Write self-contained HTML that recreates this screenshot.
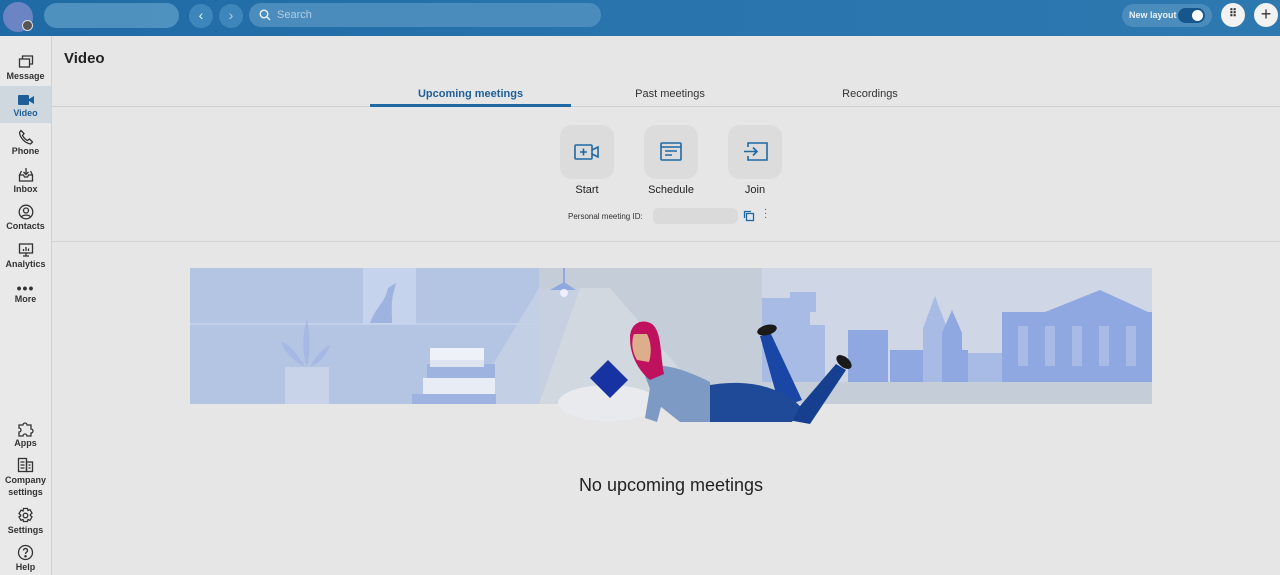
<!DOCTYPE html>
<html><head><meta charset="utf-8"><style>
*{margin:0;padding:0;box-sizing:border-box}
body{width:1280px;height:575px;overflow:hidden;background:#e6e6e6;font-family:"Liberation Sans",sans-serif;position:relative;color:#222}
.top{position:absolute;left:0;top:0;width:1280px;height:36px;background:linear-gradient(90deg,#1f6aa5,#2a74ad 50%,#2e78b0)}
.side{position:absolute;left:0;top:36px;width:52px;height:539px;background:#e9e9e9;border-right:1px solid #d2d2d2}
.si{position:absolute;left:0;width:51px;text-align:center;font-size:9px;color:#333;font-weight:bold}
.si svg{display:block;margin:0 auto 1px}
.abs{position:absolute}
</style></head><body>
<div class="top">
 <div class="abs" style="left:3px;top:2px;width:30px;height:30px;border-radius:50%;background:#6a84c4"></div>
 <div class="abs" style="left:22px;top:20px;width:11px;height:11px;border-radius:50%;background:#555;border:1.5px solid #ddd"></div>
 <div class="abs" style="left:44px;top:3px;width:135px;height:25px;border-radius:13px;background:#5a9bc6;opacity:.8"></div>
 <div class="abs" style="left:189px;top:4px;width:24px;height:24px;border-radius:50%;background:#3d86bb;color:#dfe;text-align:center;line-height:23px;font-size:14px">‹</div>
 <div class="abs" style="left:219px;top:4px;width:24px;height:24px;border-radius:50%;background:#3d86bb;color:#bcd;text-align:center;line-height:23px;font-size:14px">›</div>
 <div class="abs" style="left:249px;top:3px;width:352px;height:24px;border-radius:12px;background:#4a8dbd"></div>
 <svg class="abs" style="left:259px;top:9px" width="12" height="12" viewBox="0 0 12 12"><circle cx="5" cy="5" r="3.8" fill="none" stroke="#e5eef6" stroke-width="1.5"/><path d="M8 8l3 3" stroke="#e5eef6" stroke-width="1.5"/></svg>
 <div class="abs" style="left:277px;top:9px;font-size:11px;color:#b5cde0">Search</div>
 <div class="abs" style="left:1122px;top:4px;width:90px;height:23px;border-radius:12px;background:#4a8dbd"></div>
 <div class="abs" style="left:1129px;top:10px;font-size:9px;font-weight:bold;color:#e8f0f6">New layout</div>
 <div class="abs" style="left:1178px;top:8px;width:27px;height:15px;border-radius:8px;background:#15568d"></div>
 <div class="abs" style="left:1192px;top:10px;width:11px;height:11px;border-radius:50%;background:#fff"></div>
 <div class="abs" style="left:1221px;top:3px;width:24px;height:24px;border-radius:50%;background:#f2f2f2;text-align:center;line-height:22px;font-size:11px;font-weight:bold;color:#333">⠿</div>
 <div class="abs" style="left:1254px;top:3px;width:24px;height:24px;border-radius:50%;background:#f2f2f2;text-align:center;line-height:23px;font-size:18px;color:#333">+</div>
</div>
<div class="side">
 <div class="si" style="top:18px"><svg width="16" height="16" viewBox="0 0 16 16" fill="none" stroke="#333" stroke-width="1.3"><rect x="1.5" y="5" width="10" height="8"/><path d="M4.5 5V2h10v8h-3"/></svg>Message</div>
 <div class="abs" style="left:0;top:50px;width:51px;height:37px;background:#cfd8df"></div>
 <div class="si" style="top:57px;color:#1f5f98"><svg width="18" height="14" viewBox="0 0 18 14"><rect x="1" y="2" width="11" height="10" rx="1" fill="#1f5f98"/><path d="M12 6l5-3v8l-5-3z" fill="#1f5f98"/></svg>Video</div>
 <div class="si" style="top:93px"><svg width="16" height="16" viewBox="0 0 16 16" fill="none" stroke="#333" stroke-width="1.3"><path d="M3 1.5l3 3-1.5 2c1 2 3 4 5 5l2-1.5 3 3-2 2C7 14 2 9 1.5 3.5z"/></svg>Phone</div>
 <div class="si" style="top:131px"><svg width="16" height="16" viewBox="0 0 16 16" fill="none" stroke="#333" stroke-width="1.3"><path d="M1.5 8v6h13V8l-2-4M3.5 4l-2 4h4l1 2h3l1-2h4M8 1v6M5.5 5L8 7.5 10.5 5"/></svg>Inbox</div>
 <div class="si" style="top:168px"><svg width="16" height="16" viewBox="0 0 16 16" fill="none" stroke="#333" stroke-width="1.3"><circle cx="8" cy="8" r="6.8"/><circle cx="8" cy="6.5" r="2.5"/><path d="M3.5 13c1-2.5 8-2.5 9 0"/></svg>Contacts</div>
 <div class="si" style="top:206px"><svg width="16" height="16" viewBox="0 0 16 16" fill="none" stroke="#333" stroke-width="1.3"><rect x="1.5" y="2" width="13" height="9"/><path d="M8 11v3M5 14h6M5.5 9V7M8 9V5M10.5 9V6.5"/></svg>Analytics</div>
 <div class="si" style="top:246px"><div style="font-size:14px;line-height:12px;letter-spacing:1px">•••</div>More</div>
 <div class="si" style="top:384px"><svg width="18" height="17" viewBox="0 0 18 17" fill="none" stroke="#333" stroke-width="1.3"><path d="M2 5h4a2 2 0 114 0h4v4a2 2 0 110 4v3H10a2 2 0 10-4 0H2v-4a2 2 0 100-4z"/></svg>Apps</div>
 <div class="si" style="top:421px;line-height:12px"><svg width="17" height="16" viewBox="0 0 17 16" fill="none" stroke="#333" stroke-width="1.3"><rect x="1.5" y="1.5" width="8" height="13"/><rect x="9.5" y="5" width="6" height="9.5"/><path d="M3.5 5h4M3.5 8h4M3.5 11h4M11.5 8h2M11.5 11h2"/></svg>Company<br>settings</div>
 <div class="si" style="top:471px"><svg width="17" height="17" viewBox="0 0 17 17" fill="none" stroke="#333" stroke-width="1.3"><path d="M6.5 1.5h4l.5 2 2-.8 2 3.4-1.6 1.4v1l1.6 1.4-2 3.4-2-.8-.5 2h-4l-.5-2-2 .8-2-3.4L3.6 9V8L2 6.6l2-3.4 2 .8z"/><circle cx="8.5" cy="8.5" r="2.3"/></svg>Settings</div>
 <div class="si" style="top:508px"><svg width="17" height="17" viewBox="0 0 17 17" fill="none" stroke="#333" stroke-width="1.3"><circle cx="8.5" cy="8.5" r="7"/><path d="M6.5 6.5a2 2 0 113 1.7c-.8.5-1 1-1 1.8"/><circle cx="8.5" cy="12.3" r=".6" fill="#333"/></svg>Help</div>
</div>
<div class="abs" style="left:64px;top:50px;font-size:15px;font-weight:bold;color:#222">Video</div>
<div class="abs" style="left:52px;top:106px;width:1228px;height:1px;background:#d0d0d0"></div>
<div class="abs" style="left:370px;top:104px;width:201px;height:3px;background:#1f6aa5"></div>
<div class="abs" style="left:370px;top:88px;width:201px;text-align:center;font-size:11px;font-weight:bold;color:#1f5f98">Upcoming meetings</div>
<div class="abs" style="left:600px;top:88px;width:140px;text-align:center;font-size:11px;color:#333">Past meetings</div>
<div class="abs" style="left:800px;top:88px;width:140px;text-align:center;font-size:11px;color:#333">Recordings</div>
<div class="abs" style="left:560px;top:125px;width:54px;height:54px;border-radius:12px;background:#dcdcdc"></div>
<div class="abs" style="left:644px;top:125px;width:54px;height:54px;border-radius:12px;background:#dcdcdc"></div>
<div class="abs" style="left:728px;top:125px;width:54px;height:54px;border-radius:12px;background:#dcdcdc"></div>
<svg class="abs" style="left:574px;top:143px" width="26" height="18" viewBox="0 0 26 18" fill="none" stroke="#1f6aa5" stroke-width="1.6"><rect x="1" y="2" width="17" height="14" rx="1"/><path d="M18 7l6-3v10l-6-3M9.5 5.5v7M6 9h7"/></svg>
<svg class="abs" style="left:660px;top:142px" width="22" height="19" viewBox="0 0 22 19" fill="none" stroke="#1f6aa5" stroke-width="1.6"><rect x="1" y="1" width="20" height="17" rx="1"/><path d="M1 5h20M5 9h12M5 13h7"/></svg>
<svg class="abs" style="left:743px;top:142px" width="25" height="19" viewBox="0 0 25 19" fill="none" stroke="#1f6aa5" stroke-width="1.6"><path d="M5 5V1h19v17H5v-4M1 9.5h13M10 5.5l4 4-4 4"/></svg>
<div class="abs" style="left:547px;top:184px;width:80px;text-align:center;font-size:11px">Start</div>
<div class="abs" style="left:631px;top:184px;width:80px;text-align:center;font-size:11px">Schedule</div>
<div class="abs" style="left:715px;top:184px;width:80px;text-align:center;font-size:11px">Join</div>
<div class="abs" style="left:568px;top:212px;font-size:8px;color:#333">Personal meeting ID:</div>
<div class="abs" style="left:653px;top:208px;width:85px;height:16px;background:#dadada;border-radius:6px"></div>
<svg class="abs" style="left:743px;top:210px" width="12" height="12" viewBox="0 0 12 12" fill="none" stroke="#1f6aa5" stroke-width="1.3"><rect x="3.5" y="3.5" width="7" height="7"/><path d="M1.5 8V1.5H8"/></svg>
<div class="abs" style="left:764px;top:208px;font-size:10px;line-height:4px;color:#555">·<br>·<br>·</div>
<div class="abs" style="left:52px;top:241px;width:1228px;height:1px;background:#d3d3d3"></div>
<svg class="abs" style="left:190px;top:268px" width="962" height="156" viewBox="0 0 962 156">
 <rect x="0" y="0" width="349" height="136" fill="#b4c5e3"/>
 <rect x="349" y="0" width="223" height="136" fill="#c5ced8"/>
 <rect x="572" y="0" width="390" height="136" fill="#cfd6e5"/>
 <rect x="0" y="55" width="349" height="2" fill="#c3d1ea"/>
 <rect x="173" y="0" width="53" height="56" fill="#c6d3ec"/>
 <path d="M180 55c5-15 15-20 18-35l8-5-3 12c-2 10-1 20-1 28z" fill="#9fb3e0"/>
 <polygon points="349,20 390,20 349,136 279,136" fill="#c6d1e3" opacity=".8"/>
 <polygon points="390,20 420,20 520,136 349,136" fill="#d8dfe6" opacity=".6"/>
 <rect x="373" y="0" width="2" height="15" fill="#8fa8df"/>
 <polygon points="360,22 374,14 386,22" fill="#8fa8df"/>
 <circle cx="374" cy="25" r="4" fill="#eef"/>
 <rect x="95" y="99" width="44" height="37" fill="#c8d3ea"/>
 <path d="M117 99c-5-15-5-30 0-48 3 15 4 30 0 48zM115 99c-15-8-22-18-24-26 10 5 18 15 24 26zM120 99c5-10 12-18 20-22-3 10-10 18-20 22z" fill="#a6b8e4"/>
 <rect x="222" y="126" width="84" height="10" fill="#9fb3e0"/>
 <rect x="233" y="110" width="72" height="16" fill="#e8ecf4"/>
 <rect x="237" y="96" width="68" height="14" fill="#9fb3e0"/>
 <rect x="240" y="89" width="54" height="10" fill="#dde3ef"/>
 <rect x="240" y="80" width="54" height="12" fill="#eef1f7"/>
 <rect x="572" y="30" width="48" height="85" fill="#a8bbe4"/>
 <rect x="600" y="24" width="26" height="20" fill="#a8bbe4"/>
 <rect x="587" y="57" width="48" height="65" fill="#a8bbe4"/>
 <rect x="658" y="62" width="40" height="55" fill="#8fa8e2"/>
 <rect x="700" y="82" width="78" height="35" fill="#8fa8e2"/>
 <polygon points="733,60 745,28 757,60" fill="#a8bbe4"/>
 <rect x="733" y="60" width="22" height="57" fill="#a8bbe4"/>
 <polygon points="752,65 762,42 772,65" fill="#8fa8e2"/>
 <rect x="752" y="65" width="20" height="52" fill="#8fa8e2"/>
 <rect x="778" y="85" width="34" height="32" fill="#a8bbe4"/>
 <rect x="812" y="44" width="150" height="70" fill="#8fa8e2"/>
 <polygon points="855,44 910,22 958,44" fill="#8fa8e2"/>
 <g fill="#a8bbe4"><rect x="828" y="58" width="10" height="40"/><rect x="855" y="58" width="10" height="40"/><rect x="882" y="58" width="10" height="40"/><rect x="909" y="58" width="10" height="40"/><rect x="936" y="58" width="10" height="40"/></g>
 <rect x="572" y="114" width="390" height="22" fill="#c5ced8"/>
 <ellipse cx="418" cy="135" rx="50" ry="18" fill="#e8eaee"/>
 <!-- legs -->
 <polygon points="590,140 570,68 581,66 612,132" fill="#1a47a5"/>
 <polygon points="598,152 646,96 656,102 620,156" fill="#163f90"/>
 <ellipse cx="577" cy="62" rx="10" ry="5" fill="#1a1a1a" transform="rotate(-15 577 62)"/>
 <ellipse cx="654" cy="94" rx="9" ry="5" fill="#1a1a1a" transform="rotate(40 654 94)"/>
 <!-- pants -->
 <path d="M515 118c40-8 75 0 95 20l-8 16H515z" fill="#1f4a98"/>
 <!-- torso -->
 <path d="M452 100c18-6 40 0 68 14v40h-30l-25-20z" fill="#7d9ac4"/>
 <path d="M460 120l-5 30 12 4 8-30z" fill="#7d9ac4"/>
 <!-- hair -->
 <path d="M440 70c0-15 12-20 22-14 10 8 8 30 12 50l-14 6c-12-10-20-25-20-42z" fill="#c0115f"/>
 <path d="M444 66c-3 8-2 18 3 26l12 2c3-10 2-20-2-28z" fill="#dcae8c"/>
 <!-- book -->
 <polygon points="400,110 418,92 438,112 420,130" fill="#1733a3"/>
</svg>
<div class="abs" style="left:52px;top:475px;width:1238px;text-align:center;font-size:18px;color:#222">No upcoming meetings</div>
</body></html>
